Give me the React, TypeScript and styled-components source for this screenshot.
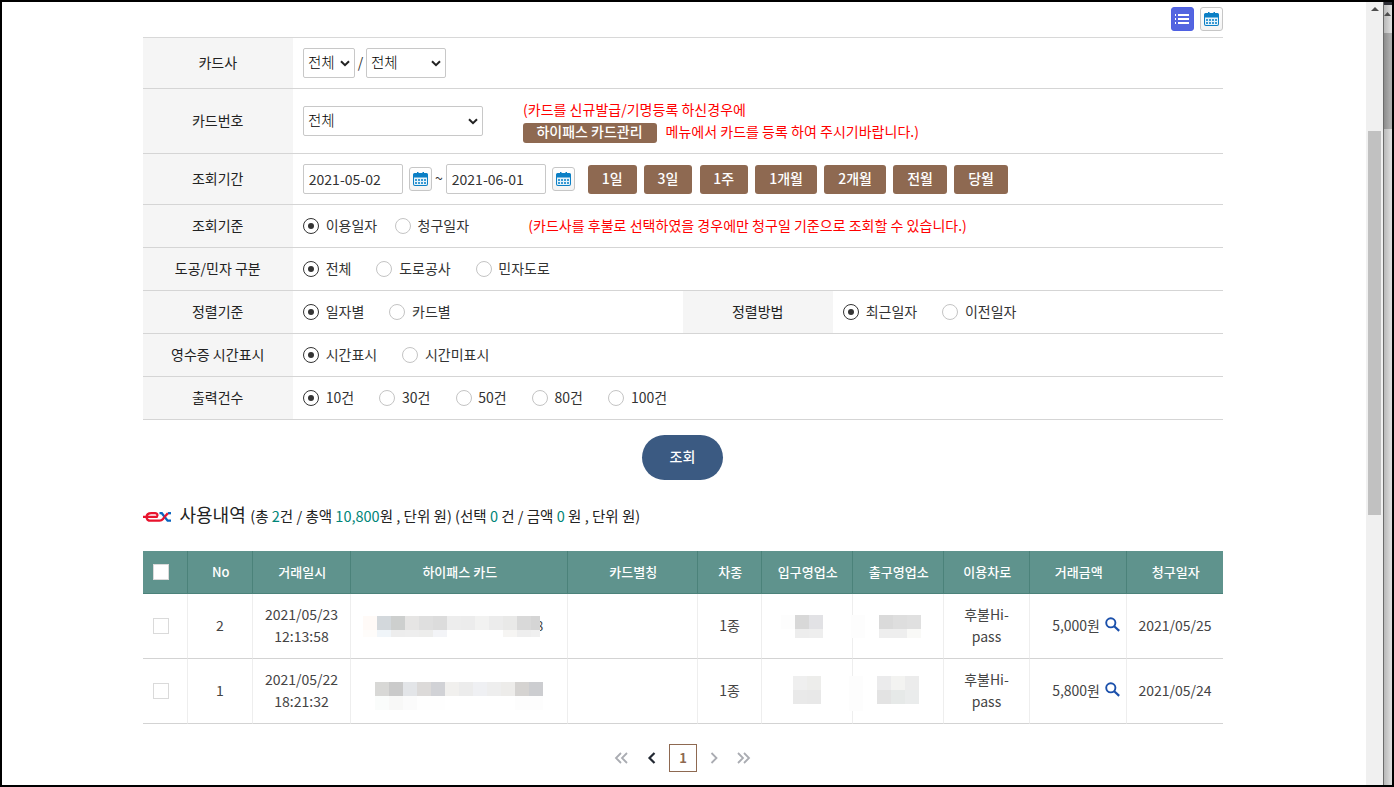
import React from "react";
import styled, { createGlobalStyle } from "styled-components";

const Global = createGlobalStyle`
  * { box-sizing: border-box; }
  body { margin: 0; background: #000; overflow: hidden; }
  body, button, input, select {
    font-family: "Noto Sans CJK KR", "Noto Sans", sans-serif;
    font-size: 14px; line-height: 22px; color: #333;
  }
`;

const Frame = styled.div`
  display: flex; width: 1394px; height: 787px; border: 2px solid #000; background: #fff;
`;
const Page = styled.main`
  flex: 1; padding: 5px 0 0 141px; overflow: hidden;
`;
const Content = styled.div`width: 1080px;`;
const Toolbar = styled.div`
  display: flex; justify-content: flex-end; gap: 6px; height: 30px;
`;
const IconButton = styled.button<{ $active?: boolean }>`
  display: flex; align-items: center; justify-content: center;
  width: 23px; height: 24px; padding: 0; flex: none;
  border: 1px solid ${p => (p.$active ? "#4f60e3" : "#c6c6c6")};
  border-radius: 3px;
  background: ${p => (p.$active ? "#5365e0" : "linear-gradient(#fff, #f3f3f3)")};
`;

const Form = styled.section`border-top: 1px solid #d8d8d8;`;
const FormRow = styled.div<{ $h?: number }>`
  display: flex; height: ${p => p.$h ?? 43}px; border-bottom: 1px solid #d5d5d5;
`;
const Label = styled.div`
  display: flex; align-items: center; justify-content: center;
  width: 150px; flex: none; padding: 0 0.5px 3px 0; background: #f5f5f5; color: #222;
`;
const Field = styled.div<{ $w?: number }>`
  display: flex; align-items: center; padding-left: 10px;
  ${p => (p.$w ? `width: ${p.$w}px;` : "flex: 1;")}
`;
const SelectBox = styled.div<{ $w: number }>`
  display: flex; align-items: center; justify-content: space-between;
  width: ${p => p.$w}px; height: 30px; padding: 0 4px 0 4px;
  border: 1px solid #c8c8c8; border-radius: 2px; background: #fff; color: #000;
`;
const SelectText = styled.span`padding-bottom: 2px; font-weight: 300; font-size: 14.5px;`;
const Slash = styled.span`width: 11px; text-align: center; padding-bottom: 2px;`;
const DateInput = styled.input`
  width: 100px; height: 30px; padding: 0 4.8px; border: 1px solid #c8c8c8; border-radius: 2px;
  margin-right: 6px;
`;
const Tilde = styled.span`width: 14px; text-align: center; padding-bottom: 3px;`;
const Periods = styled.div`display: flex; gap: 7.250px; margin: 0 0 0 13px;`;
const BrownButton = styled.button<{ $w: number; $small?: boolean }>`
  width: ${p => p.$w}px; height: ${p => (p.$small ? 20 : 29)}px;
  padding: ${p => (p.$small ? "0 1px 3px 0" : "0 0 2px")};
  margin-top: ${p => (p.$small ? 4 : 0)}px;
  border: 0; border-radius: 3px; background: #8e6951; color: #fff; font-weight: 500;
  line-height: ${p => (p.$small ? 17 : 26)}px;
`;
const Notice = styled.div<{ $ml: number }>`
  margin-left: ${p => p.$ml}px; color: #f00; padding-bottom: 3px; letter-spacing: 0.02px;
`;
const NoticeLine = styled.div`display: flex; align-items: center; gap: 8.5px; height: 22px;`;
const Radio = styled.label<{ $gap: number }>`
  display: flex; align-items: center; margin-right: ${p => p.$gap}px;
`;
const RadioText = styled.span`padding-bottom: 3px;`;
const Dot = styled.span<{ $on: boolean }>`
  display: flex; align-items: center; justify-content: center;
  width: 16px; height: 16px; margin-right: 6.7px; border-radius: 50%;
  border: 1px solid ${p => (p.$on ? "#333" : "#c4c4c4")};
  &::after {
    content: ""; width: 6px; height: 6px; border-radius: 50%;
    background: ${p => (p.$on ? "#333" : "transparent")};
  }
`;
const SearchButton = styled.button`
  display: block; width: 81px; height: 45px; margin: 15px auto 0 499px; padding: 0 0 4px;
  border: 0; border-radius: 23px; background: #3b5a82; color: #fff; font-weight: 500;
`;

const Summary = styled.div`
  display: flex; align-items: baseline; height: 30px; margin-top: 19px; white-space: pre;
  line-height: 30px; font-size: 14.53px; color: #222;
`;
const Heading = styled.h2`
  margin: 0 4.5px 0 7.5px; font-size: 18px; font-weight: 400; line-height: 30px;
`;
const Count = styled.b`font-weight: 400; color: #008578;`;

const Table = styled.table`
  width: 1080px; margin-top: 22px; table-layout: fixed; border-collapse: separate; border-spacing: 0;
`;
const Th = styled.th`
  height: 43px; padding: 0 0 1px 1.5px; background: #5f938d; color: #fff; font-size: 13px; font-weight: 500;
  border-right: 1px solid #4b827a; border-bottom: 1px solid #4b827a;
  &:first-child { padding-left: 0; }
  &:last-child { border-right: 0; }
`;
const Td = styled.td<{ $bare?: boolean }>`
  height: 65px; padding: 0 0 ${p => (p.$bare ? 0 : 2)}px; text-align: center; color: #444;
  border-right: 1px solid #eee; border-bottom: 1px solid #d3d3d3;
  &:last-child { border-right: 0; }
`;
const Check = styled.span`
  display: block; width: 16px; height: 16px; margin-left: 10px; border: 1px solid #dadada; background: #fff;
`;
const Amount = styled.span`
  display: flex; align-items: center; justify-content: flex-end; gap: 4.5px; padding-right: 6.5px;
`;
const MaskedCell = styled.div<{ $w: number }>`
  position: relative; width: ${p => p.$w}px; height: 64px;
`;
const LastDigit = styled.span`position: absolute; left: 184.500px; top: 20px;`;
const MosaicSvg = styled.svg`display: block; position: relative; overflow: visible;`;
const Pager = styled.nav`
  display: flex; align-items: center; height: 28px; margin: 20px 0 0 471px;
`;
const PageNo = styled.span`
  width: 28px; height: 28px; margin: 0 12px; border: 1px solid #8e6951; color: #8e6951;
  font-size: 13px; font-weight: 700; line-height: 26px; text-align: center;
`;
const PagerGap = styled.span<{ $w: number }>`width: ${p => p.$w}px;`;
const InnerBar = styled.div`
  display: flex; flex-direction: column; width: 17px; background: #f0f0f0; padding: 5px 0 0 2px;
`;
const InnerThumb = styled.div`width: 13px; height: 384px; margin-top: 120px; background: #c1c1c1;`;
const OuterBar = styled.div`
  width: 9px; border-left: 1px solid #6c6c6c; background: linear-gradient(90deg, #b8b8b8, #dcdcdc 7px);
`;
const OuterCap = styled.div`height: 3px; background: #2c2c33;`;
const OuterTop = styled.div`height: 28px; padding-top: 7px; line-height: 0;`;
const OuterThumb = styled.div`height: 96px; background: linear-gradient(90deg, #8d8d8d, #acacac 6px);`;

const Calendar = () => (
  <svg width="15" height="14" viewBox="0 0 15 14">
    <path d="M0 2.500Q0 1 1.500 1H4V0h1.500v1h4V0H11v1h2.500Q15 1 15 2.500V12q0 2-2 2H2q-2 0-2-2z" fill="#0b7fc5" />
    <path d="M1 5.500h13V12q0 1-1 1H2q-1 0-1-1z" fill="#e6f3fa" />
    <path d="M2 7h2v2H2zM5 7h2v2H5zM8 7h2v2H8zM11 7h2v2h-2zM2 10h2v2H2zM5 10h2v2H5zM8 10h2v2H8zM11 10h2v2h-2z" fill="#3a9ad4" />
  </svg>
);
const ListIcon = () => (
  <svg width="15" height="12" viewBox="0 0 15 12" shapeRendering="crispEdges" fill="#fff">
    <path d="M0 1h1v2H0zM3 1h11v2H3zM0 5h1v2H0zM3 5h11v2H3zM0 9h1v2H0zM3 9h11v2H3z" />
  </svg>
);
const Chevron = () => (
  <svg width="10" height="7" viewBox="0 0 10 7"><path d="M1 1.200 5 5.200 9 1.200" fill="none" stroke="#222" strokeWidth="2" /></svg>
);
const SearchSvg = styled.svg`margin-bottom: 1px;`;
const Search = () => (
  <SearchSvg width="15" height="15" viewBox="0 0 15 15" fill="none" stroke="#1b50ab">
    <circle cx="5.800" cy="5.800" r="4.600" strokeWidth="1.900" /><path d="m9.200 9.200 5 4.700" strokeWidth="2.200" />
  </SearchSvg>
);
const LogoSvg = styled.svg`margin-bottom: 1px;`;
const Logo = () => (
  <LogoSvg width="29" height="10" viewBox="0 0 29 10" fill="none" strokeWidth="2.300">
    <path d="M16.500 1.200h2.300L24.600 8.700H28" stroke="#0a65c0" />
    <path d="M24.800 1.200H28" stroke="#0a65c0" />
    <path d="M0 4.900h13.800c1.400-2 .4-3.700-1.600-3.700H8.500C4.200 1.200 3.600 3 3.600 4.900s1.400 3.800 4.400 3.800h8.600c1.600 0 2.400-.5 3.400-1.700l1.300-1.700" stroke="#e8132d" />
    <path d="m21.500 5 3.300-3.800" stroke="#e8132d" />
  </LogoSvg>
);
const Arrow = ({ double, flip, dark }: { double?: boolean; flip?: boolean; dark?: boolean }) => (
  <svg width={double ? 14 : 10} height="12" viewBox={`0 0 ${double ? 14 : 10} 12`} fill="none"
    stroke={dark ? "#222832" : "#aaacb2"} strokeWidth={dark ? 2.2 : 1.8} transform={flip ? "scale(-1 1)" : undefined}>
    <path d={double ? "M7 1 2 6l5 5M13 1 8 6l5 5" : "M7.500 1 2.500 6l5 5"} />
  </svg>
);
const ArrowSvg = styled.svg<{ $ml: number }>`display: block; flex: none; margin-left: ${p => p.$ml}px;`;
const UpArrow = ({ w = 8, ml = 3 }: { w?: number; ml?: number }) => (
  <ArrowSvg width={w} height="4" viewBox="0 0 8 4" $ml={ml} preserveAspectRatio="none"><path d="M0 4 4 0l4 4z" fill="#4d4d4d" /></ArrowSvg>
);

type Block = [number, number, number, number, string];
const strip = (x: number, y: number, h: number, colors: string[], end = 9999): Block[] =>
  colors.flatMap((c, i) => (c ? [[x + i * 14, y, Math.min(14, end - x - i * 14), h, "#" + c] as Block] : []));

const Mosaic = ({ w, blocks }: { w: number; blocks: Block[] }) => (
  <MosaicSvg width={w} height="64" shapeRendering="crispEdges">
    {blocks.map(([x, y, bw, h, c], i) => <rect key={i} x={x} y={y} width={bw} height={h} fill={c} />)}
  </MosaicSvg>
);

const widths = [45, 65, 98, 217, 130, 64, 91, 91, 86, 97, 96];
const heads = ["No", "거래일시", "하이패스 카드", "카드별칭", "차종", "입구영업소", "출구영업소", "이용차로", "거래금액", "청구일자"];
const rows = [
  {
    no: 2, date: "2021/05/23", time: "12:13:58", amount: "5,000원", bill: "2021/05/25", digit: true,
    card: [
      ...strip(12, 22, 14, ["fffaf7", "d3d8dc", "cdcfce", "e6e5e4", "dfdfdf", "dcdcdc", "ededed", "ececec", "f2f2f1", "ececec", "e9e9e8", "d9d9d9", "d5d5d5"], 189),
      ...strip(12, 36, 7, ["fefcfa", "f0f5f9", "ededed", "eeeeee", "ededec", "f3f4f7", "", "", "", "", "f6f5f3", "eeeeee", "f0f0f0"], 189),
    ],
    entry: [...strip(19, 21, 14, ["fdfdfd", "d8d8d8", "e2e2e5"]), ...strip(33, 35, 9, ["ededed", "eeeeee"])],
    exit: [...strip(-2, 21, 23, ["fdfdfd"]), ...strip(26, 21, 14, ["dadada", "dedede", "e0e0e0"]), ...strip(26, 35, 9, ["eeeeee", "eeeeee", "f9f9f7"])],
  },
  {
    no: 1, date: "2021/05/22", time: "18:21:32", amount: "5,800원", bill: "2021/05/24", digit: false,
    card: [
      ...strip(24, 23, 14, ["d8d8d6", "cacaca", "e3e5e8", "dcdad9", "d1d2d6", "f1f0ee", "ececec", "eff0f3", "eeeeee", "edecea", "d5d3d1", "cccdd0"]),
      ...strip(24, 37, 14, ["fafcfb", "f8f8f7", "fbfbfb", "fefefe", "fefefe", "", "", "", "", "", "fdfdfd", "fdfdfd"]),
    ],
    entry: [...strip(31, 17, 14, ["efefef", "ededeb"]), ...strip(31, 31, 14, ["e9e9e9", "e8e8e8"])],
    exit: [...strip(-4, 17, 35, ["fdfdfd"]), ...strip(24, 17, 14, ["ebebec", "f3f3f1", "ececec"]), ...strip(24, 31, 14, ["e3e3e3", "e6e9e8", "eaecec"])],
  },
];

const Radios = ({ items, gap = 25 }: { items: string[]; gap?: number }) => (
  <>{items.map((t, i) => <Radio key={t} $gap={gap}><Dot $on={i === 0} /><RadioText>{t}</RadioText></Radio>)}</>
);
const Select = ({ w }: { w: number }) => (
  <SelectBox $w={w}><SelectText>전체</SelectText><Chevron /></SelectBox>
);
const periods: [string, number][] = [["1일", 48.5], ["3일", 48.5], ["1주", 48.5], ["1개월", 61.75], ["2개월", 61.75], ["전월", 53.75], ["당월", 53.75]];

export default function App() {
  return (
    <>
      <Global />
      <Frame>
        <Page>
          <Content>
            <Toolbar>
              <IconButton $active><ListIcon /></IconButton>
              <IconButton><Calendar /></IconButton>
            </Toolbar>
            <Form>
              <FormRow $h={51}>
                <Label>카드사</Label>
                <Field>
                  <Select w={52} />
                  <Slash>/</Slash>
                  <Select w={80} />
                </Field>
              </FormRow>
              <FormRow $h={65}>
                <Label>카드번호</Label>
                <Field>
                  <Select w={180} />
                  <Notice $ml={40}>
                    <NoticeLine>(카드를 신규발급/기명등록 하신경우에</NoticeLine>
                    <NoticeLine><BrownButton $w={134} $small>하이패스 카드관리</BrownButton>메뉴에서 카드를 등록 하여 주시기바랍니다.)</NoticeLine>
                  </Notice>
                </Field>
              </FormRow>
              <FormRow $h={51}>
                <Label>조회기간</Label>
                <Field>
                  <DateInput defaultValue="2021-05-02" />
                  <IconButton><Calendar /></IconButton>
                  <Tilde>~</Tilde>
                  <DateInput defaultValue="2021-06-01" />
                  <IconButton><Calendar /></IconButton>
                  <Periods>{periods.map(([t, w]) => <BrownButton key={t} $w={w}>{t}</BrownButton>)}</Periods>
                </Field>
              </FormRow>
              <FormRow>
                <Label>조회기준</Label>
                <Field>
                  <Radios items={["이용일자", "청구일자"]} gap={17.7} />
                  <Notice $ml={41.5}>(카드사를 후불로 선택하였을 경우에만 청구일 기준으로 조회할 수 있습니다.)</Notice>
                </Field>
              </FormRow>
              <FormRow><Label>도공/민자 구분</Label><Field><Radios items={["전체", "도로공사", "민자도로"]} /></Field></FormRow>
              <FormRow>
                <Label>정렬기준</Label>
                <Field $w={390}><Radios items={["일자별", "카드별"]} /></Field>
                <Label>정렬방법</Label>
                <Field><Radios items={["최근일자", "이전일자"]} /></Field>
              </FormRow>
              <FormRow><Label>영수증 시간표시</Label><Field><Radios items={["시간표시", "시간미표시"]} /></Field></FormRow>
              <FormRow><Label>출력건수</Label><Field><Radios items={["10건", "30건", "50건", "80건", "100건"]} gap={25.2} /></Field></FormRow>
            </Form>
            <SearchButton>조회</SearchButton>
            <Summary>
              <Logo />
              <Heading>사용내역</Heading>
              <span>(총 <Count>2</Count>건 / 총액 <Count>10,800</Count>원 , 단위 원) (선택 <Count>0</Count> 건 / 금액 <Count>0</Count> 원 , 단위 원)</span>
            </Summary>
            <Table>
              <colgroup>{widths.map((w, i) => <col key={i} style={{ width: w }} />)}</colgroup>
              <thead>
                <tr><Th><Check /></Th>{heads.map(h => <Th key={h}>{h}</Th>)}</tr>
              </thead>
              <tbody>
                {rows.map(r => (
                  <tr key={r.no}>
                    <Td $bare><Check /></Td>
                    <Td>{r.no}</Td>
                    <Td>{r.date}<br />{r.time}</Td>
                    <Td $bare><MaskedCell $w={216}>{r.digit && <LastDigit>8</LastDigit>}<Mosaic w={216} blocks={r.card} /></MaskedCell></Td>
                    <Td />
                    <Td>1종</Td>
                    <Td $bare><Mosaic w={90} blocks={r.entry} /></Td>
                    <Td $bare><Mosaic w={90} blocks={r.exit} /></Td>
                    <Td>후불Hi-<br />pass</Td>
                    <Td><Amount>{r.amount}<Search /></Amount></Td>
                    <Td>{r.bill}</Td>
                  </tr>
                ))}
              </tbody>
            </Table>
            <Pager>
              <Arrow double />
              <PagerGap $w={19} />
              <Arrow dark />
              <PageNo>1</PageNo>
              <Arrow flip />
              <PagerGap $w={18} />
              <Arrow double flip />
            </Pager>
          </Content>
        </Page>
        <InnerBar><UpArrow /><InnerThumb /></InnerBar>
        <OuterBar><OuterCap /><OuterTop><UpArrow w={7} ml={0} /></OuterTop><OuterThumb /></OuterBar>
      </Frame>
    </>
  );
}
